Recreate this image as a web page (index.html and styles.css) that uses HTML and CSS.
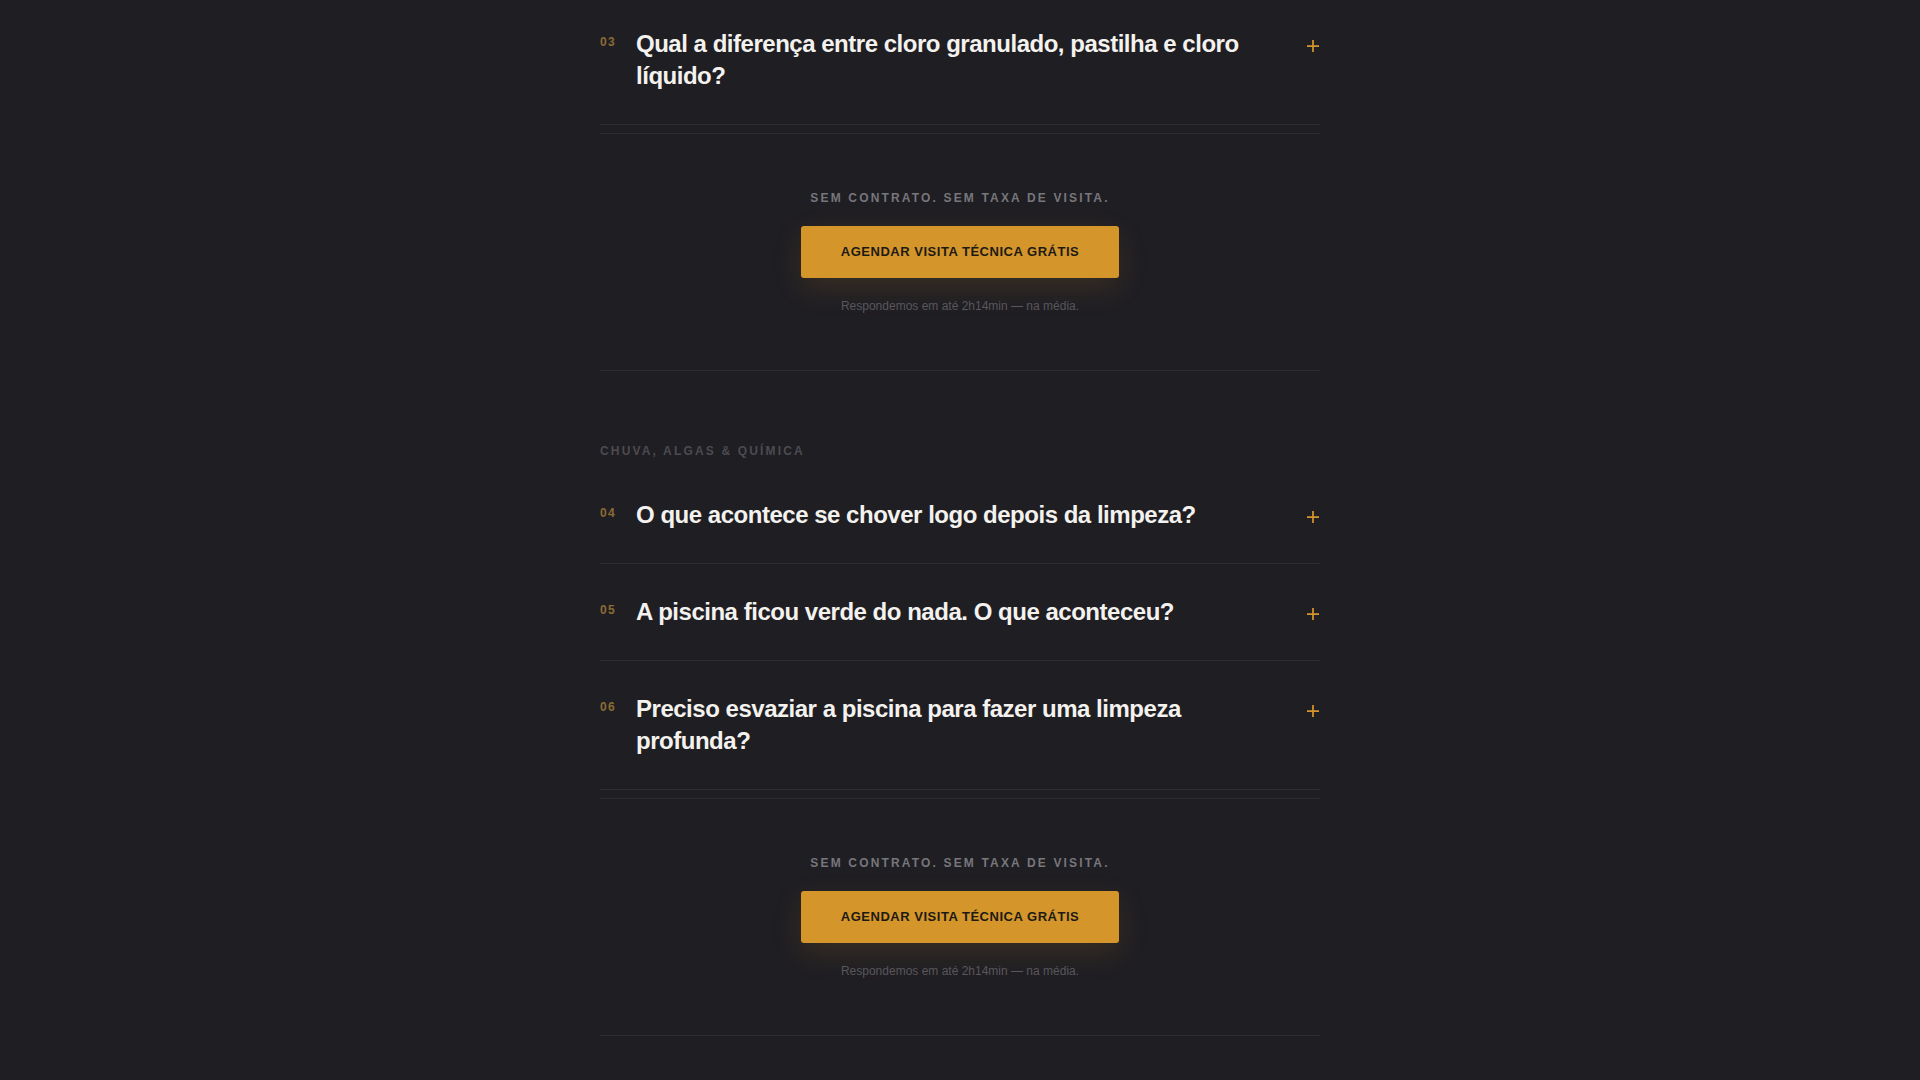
FILE: index.html
```html
<!DOCTYPE html>
<html lang="pt-BR">
<head>
  <meta charset="UTF-8">
  <meta name="viewport" content="width=device-width, initial-scale=1.0">
  <title>Perguntas frequentes - Limpeza de piscinas</title>
  <link rel="stylesheet" href="styles.css">
</head>
<body>
  <main class="wrap">

    <!-- Tratamento da água (continuação) -->
    <div class="faq-list">
      <div class="faq-item">
        <span class="faq-num">03</span>
        <h3 class="faq-q">Qual a diferença entre cloro granulado, pastilha e cloro líquido?</h3>
        <span class="faq-toggle">
          <svg width="14" height="14" viewBox="0 0 14 14"><path d="M7 1v12M1 7h12" stroke="currentColor" stroke-width="1.75" fill="none"/></svg>
        </span>
      </div>
    </div>

    <div class="cta">
      <p class="cta-label">Sem contrato. Sem taxa de visita.</p>
      <a class="cta-btn" href="#agendar">Agendar visita técnica grátis</a>
      <p class="cta-note">Respondemos em até 2h14min — na média.</p>
    </div>

    <!-- Chuva, algas e química -->
    <section class="faq-group">
      <p class="group-label">Chuva, algas &amp; química</p>
      <div class="faq-list">
        <div class="faq-item">
          <span class="faq-num">04</span>
          <h3 class="faq-q">O que acontece se chover logo depois da limpeza?</h3>
          <span class="faq-toggle">
            <svg width="14" height="14" viewBox="0 0 14 14"><path d="M7 1v12M1 7h12" stroke="currentColor" stroke-width="1.75" fill="none"/></svg>
          </span>
        </div>
        <div class="faq-item">
          <span class="faq-num">05</span>
          <h3 class="faq-q">A piscina ficou verde do nada. O que aconteceu?</h3>
          <span class="faq-toggle">
            <svg width="14" height="14" viewBox="0 0 14 14"><path d="M7 1v12M1 7h12" stroke="currentColor" stroke-width="1.75" fill="none"/></svg>
          </span>
        </div>
        <div class="faq-item">
          <span class="faq-num">06</span>
          <h3 class="faq-q">Preciso esvaziar a piscina para fazer uma limpeza profunda?</h3>
          <span class="faq-toggle">
            <svg width="14" height="14" viewBox="0 0 14 14"><path d="M7 1v12M1 7h12" stroke="currentColor" stroke-width="1.75" fill="none"/></svg>
          </span>
        </div>
      </div>
    </section>

    <div class="cta">
      <p class="cta-label">Sem contrato. Sem taxa de visita.</p>
      <a class="cta-btn" href="#agendar">Agendar visita técnica grátis</a>
      <p class="cta-note">Respondemos em até 2h14min — na média.</p>
    </div>

  </main>
</body>
</html>
```

FILE: styles.css
```css
html, body {
  margin: 0;
  background-color: #1f1e23;
}
body {
  font-family: "Liberation Sans", Arial, sans-serif;
  color: #f2f0ec;
}
.wrap {
  width: 720px;
  margin: -4px auto 0;
}

/* FAQ items */
.faq-item {
  display: grid;
  grid-template-columns: 36px 1fr 14px;
  column-gap: 40px;
  padding: 32px 0;
  border-bottom: 1px solid #2f2e34;
}
.faq-item .faq-num {
  grid-column: 1;
  margin-top: 8px;
  font-size: 12px;
  line-height: 12px;
  font-weight: bold;
  letter-spacing: 0.12em;
  color: #8a6c34;
}
.faq-q {
  grid-column: 2;
  margin: 0 0 0 -40px;
  font-size: 24px;
  line-height: 32px;
  font-weight: bold;
  letter-spacing: -0.02em;
  color: #f4f2ee;
}
.faq-toggle {
  grid-column: 3;
  margin-top: 11px;
  width: 14px;
  height: 14px;
  color: #d4962c;
}
.faq-toggle svg {
  display: block;
}

/* Call to action block */
.cta {
  margin-top: 8px;
  padding: 56px 0;
  border-top: 1px solid #2c2b31;
  border-bottom: 1px solid #2c2b31;
  text-align: center;
}
.cta-label {
  margin: 0;
  font-size: 12px;
  line-height: 16px;
  font-weight: bold;
  letter-spacing: 0.18em;
  text-transform: uppercase;
  color: #77767c;
}
.cta-btn {
  display: inline-block;
  margin: 20px 0;
  padding: 0 40px;
  height: 52px;
  line-height: 52px;
  background-color: #d4952a;
  border-radius: 3px;
  box-shadow: 0 10px 30px rgba(212, 149, 42, 0.14);
  color: #1d1a15;
  font-size: 13px;
  font-weight: bold;
  letter-spacing: 0.04em;
  text-transform: uppercase;
  text-decoration: none;
}
.cta-note {
  margin: 0;
  font-size: 12px;
  line-height: 16px;
  color: #58575d;
}

/* Grouped questions */
.faq-group {
  padding-top: 72px;
}
.group-label {
  margin: 0 0 8px;
  font-size: 12px;
  line-height: 16px;
  font-weight: bold;
  letter-spacing: 0.18em;
  text-transform: uppercase;
  color: #4c4b51;
}
```
